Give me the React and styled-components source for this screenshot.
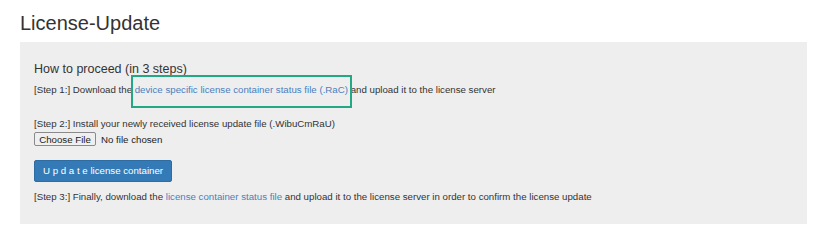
import React from "react";
import styled, { createGlobalStyle } from "styled-components";

const Global = createGlobalStyle`
  html, body { margin: 0; padding: 0; background: #fff; }
  body { font-family: "Liberation Sans", Arial, sans-serif; color: #333; }
`;

const Page = styled.div`
  padding: 11px 13px 0 20px;
  width: 787px;
`;

const Title = styled.h1`
  margin: 0 0 7px 0;
  font-size: 20px;
  line-height: 24px;
  font-weight: 400;
  color: #333;
`;

const Panel = styled.div`
  background: #eeeeee;
  padding: 20px 14px 20px 14px;
`;

const Heading = styled.h3`
  margin: 0 0 6px 0;
  font-size: 12.5px;
  line-height: 15px;
  font-weight: 400;
  color: #333;
`;

const Line = styled.p`
  margin: ${(p) => p.$mt || 0}px 0 0 0;
  font-size: 9.7px;
  line-height: 14px;
  color: #333;
  white-space: nowrap;
`;

const Link = styled.a`
  color: #4b7fbf;
  text-decoration: none;
  cursor: pointer;
`;

const Marked = styled.span`
  position: relative;
`;

const Highlight = styled.span`
  position: absolute;
  left: -4px;
  right: -4px;
  top: -9px;
  bottom: -13px;
  border: 2px solid #22a884;
  pointer-events: none;
`;

const FileRow = styled.div`
  margin-top: 1px;
  display: flex;
  align-items: center;
  gap: 5px;
  font-size: 9.7px;
`;

const FileButton = styled.label`
  display: inline-flex;
  align-items: center;
  justify-content: center;
  box-sizing: border-box;
  width: 62px;
  height: 14px;
  background: #efefef;
  border: 1px solid #8a8a8a;
  border-radius: 2px;
  font-size: 9.7px;
  color: #222;
  cursor: pointer;
  input { display: none; }
`;

const FileName = styled.span`
  color: #222;
`;

const PrimaryButton = styled.button`
  display: block;
  margin-top: 14px;
  height: 22px;
  padding: 0 8px;
  background: #337ab7;
  border: 1px solid #2e6da4;
  border-radius: 2px;
  color: #fff;
  font-family: "Liberation Sans", Arial, sans-serif;
  font-size: 9.7px;
  line-height: 20px;
  cursor: pointer;
`;

export default function App() {
  return (
    <>
      <Global />
      <Page>
        <Title>License-Update</Title>
        <Panel>
          <Heading>How to proceed (in 3 steps)</Heading>
          <Line>
            [Step 1:] Download the{" "}
            <Marked>
              <Link>device specific license container status file (.RaC)</Link>
              <Highlight />
            </Marked>{" "}
            and upload it to the license server
          </Line>
          <Line $mt={20}>[Step 2:] Install your newly received license update file (.WibuCmRaU)</Line>
          <FileRow>
            <FileButton>
              Choose File
              <input type="file" />
            </FileButton>
            <FileName>No file chosen</FileName>
          </FileRow>
          <PrimaryButton>U p d a t e license container</PrimaryButton>
          <Line $mt={8}>
            [Step 3:] Finally, download the <Link>license container status file</Link> and upload it to the
            license server in order to confirm the license update
          </Line>
        </Panel>
      </Page>
    </>
  );
}
